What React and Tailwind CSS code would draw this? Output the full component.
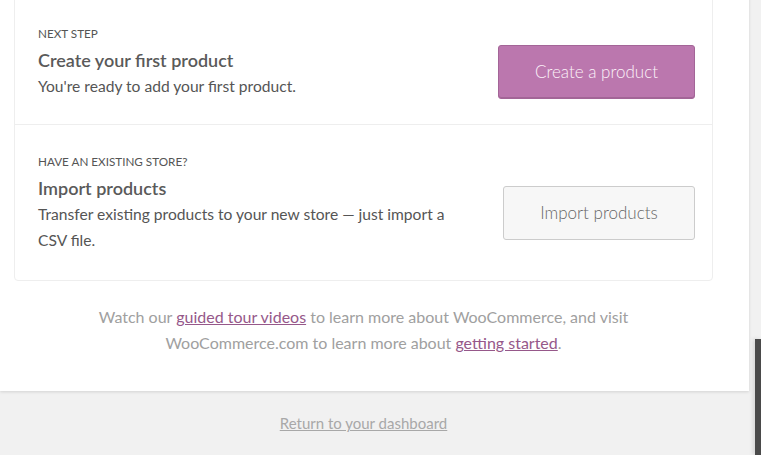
import React from 'react';

// Final step of the store setup wizard: next actions + help links.
const steps = [
  {
    label: 'Next step',
    title: 'Create your first product',
    text: "You're ready to add your first product.",
    action: 'Create a product',
    primary: true,
  },
  {
    label: 'Have an existing store?',
    title: 'Import products',
    text: 'Transfer existing products to your new store — just import a CSV file.',
    action: 'Import products',
  },
];

function Step({ step, first }) {
  return (
    <li className={`flex items-center pl-[23px] pr-[17px] pt-[28px] ${first ? 'pb-[25px]' : 'pb-[27px] border-t border-[#eee]'}`}>
      <div className="w-[420px] text-[#555]">
        <p className="text-[11.7px] leading-[16px] uppercase">{step.label}</p>
        <h3 className="mt-[7px] text-[18px] leading-[24px] font-semibold text-[#5a5a5a]">{step.title}</h3>
        <p className="mt-[1px] text-[15.6px] leading-[26px]">{step.text}</p>
      </div>
      <div className="ml-auto mt-[19px]">
        {step.primary ? (
          <button className="w-[197px] h-[54px] rounded-[3px] border border-[#a36597] bg-[#bb77ae] text-[17px] font-light text-[#fbf2f9] shadow-[inset_0_-1px_0_#a36597]">
            {step.action}
          </button>
        ) : (
          <button className="w-[192px] h-[54px] rounded-[3px] border border-[#ccc] bg-[#f7f7f7] text-[17px] font-light text-[#666]">
            {step.action}
          </button>
        )}
      </div>
    </li>
  );
}

export default function App() {
  return (
    <div className="min-h-screen bg-[#f1f1f1] flex font-['Lato','Liberation_Sans',sans-serif]">
      <div className="w-[749px] shrink-0 flex flex-col">
        <div className="-mt-[4px] bg-white pl-[14px] pr-[36px] pb-[35px] shadow-[0_1px_3px_rgba(0,0,0,0.13)]">
          <ul className="border border-[#eee] rounded-[4px]">
            {steps.map((s, i) => <Step key={s.title} step={s} first={i === 0} />)}
          </ul>
          <p className="mt-[23px] text-center text-[16px] leading-[26px] text-[#a0a0a0]">
            Watch our <a href="#" className="text-[#96588a] underline">guided tour videos</a> to learn more about WooCommerce, and visit
            <br />
            WooCommerce.com to learn more about <a href="#" className="text-[#96588a] underline">getting started</a>.
          </p>
        </div>
        <div className="mt-[20px] pr-[22px] text-center">
          <a href="#" className="text-[15px] leading-[20px] text-[#a8a8a8] underline">Return to your dashboard</a>
        </div>
      </div>
      <div className="ml-[6px] w-[6px] flex flex-col">
        <div className="h-[339px] shrink-0" />
        <div className="flex-1 bg-[#4a4a4a] shadow-[-2px_0_4px_rgba(0,0,0,0.12)]" />
      </div>
    </div>
  );
}
